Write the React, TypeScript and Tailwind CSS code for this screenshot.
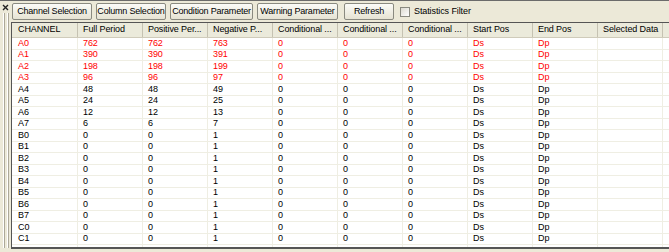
import React from "react";

const columns = [
  "CHANNEL",
  "Full Period",
  "Positive Per...",
  "Negative P...",
  "Conditional ...",
  "Conditional ...",
  "Conditional ...",
  "Start Pos",
  "End Pos",
  "Selected Data",
];

type Row = { ch: string; vals: string[]; red?: boolean };

const mk = (ch: string, a: string, b: string, c: string, red = false): Row => ({
  ch,
  vals: [a, b, c, "0", "0", "0", "Ds", "Dp", ""],
  red,
});

const rows: Row[] = [
  mk("A0", "762", "762", "763", true),
  mk("A1", "390", "390", "391", true),
  mk("A2", "198", "198", "199", true),
  mk("A3", "96", "96", "97", true),
  mk("A4", "48", "48", "49"),
  mk("A5", "24", "24", "25"),
  mk("A6", "12", "12", "13"),
  mk("A7", "6", "6", "7"),
  ...["B0", "B1", "B2", "B3", "B4", "B5", "B6", "B7", "C0", "C1", "C2"].map((c) =>
    mk(c, "0", "0", "1")
  ),
];

const buttons = [
  { label: "Channel Selection", w: "w-[80px]" },
  { label: "Column Selection", w: "w-[70px]" },
  { label: "Condition Parameter", w: "w-[83px]" },
  { label: "Warning Parameter", w: "w-[81px]" },
  { label: "Refresh", w: "w-[50px]" },
];

const ToolButton: React.FC<{ label: string; w: string }> = ({ label, w }) => (
  <button
    className={`${w} h-[17px] shrink-0 rounded-[2px] border border-[#8a8a80] bg-gradient-to-b from-[#fbfbf8] to-[#e6e3d3] text-[9px] tracking-[-0.2px] leading-none text-black whitespace-nowrap`}
  >
    {label}
  </button>
);

export default function App() {
  return (
    <div
      className="w-[669px] h-[252px] overflow-hidden flex bg-[#ece9d8] border-t border-[#6b6b6b] text-black"
      style={{ fontFamily: '"Liberation Sans", Arial, sans-serif' }}
    >
      {/* left grip strip */}
      <div className="w-[11px] shrink-0 flex flex-col items-center">
        <svg width="11" height="11" viewBox="0 0 11 11" className="mt-[1px]">
          <path d="M3 3 L8 8 M8 3 L3 8" stroke="#222" strokeWidth="1.4" />
        </svg>
        <div className="flex-1 w-full flex gap-[2px] pl-[3px] pb-[4px]">
          <div className="w-[2px] border-l border-white border-r border-r-[#aca899]" />
          <div className="w-[2px] border-l border-white border-r border-r-[#aca899]" />
        </div>
      </div>

      <div className="flex-1 flex flex-col min-w-0">
        {/* toolbar */}
        <div className="h-[21px] shrink-0 flex items-center pl-[1px]">
          <div className="flex items-center gap-[4px]">
            {buttons.slice(0, 4).map((b) => (
              <ToolButton key={b.label} {...b} />
            ))}
          </div>
          <div className="ml-[6px] flex items-center">
            <ToolButton {...buttons[4]} />
          </div>
          <label className="ml-[6px] flex items-center gap-[4px] text-[9px] tracking-[-0.1px] whitespace-nowrap">
            <span className="w-[10px] h-[10px] border border-[#8a8a80] bg-gradient-to-br from-[#dcdad0] to-white" />
            Statistics Filter
          </label>
        </div>

        {/* table */}
        <div className="flex-1 flex flex-col min-h-0 border-t border-l border-[#555] border-b-2 border-b-[#555] bg-white overflow-hidden mb-[3px]">
          <div className="grid grid-cols-[1px_repeat(10,65px)_1fr] h-[15px] shrink-0 bg-[#ebeadb] border-b border-[#cfcbba]">
            <div />
            {columns.map((c, i) => (
              <div
                key={i}
                className="pl-[5px] flex items-center text-[9px] tracking-[-0.1px] whitespace-nowrap overflow-hidden border-r border-[#c5c2b2]"
              >
                {c}
              </div>
            ))}
            <div />
          </div>
          <div className="flex-1 overflow-hidden">
            {rows.map((r) => (
              <div
                key={r.ch}
                className={`grid grid-cols-[1px_repeat(10,65px)_1fr] h-[11.5px] text-[9px] tracking-[-0.1px] leading-none ${
                  r.red ? "text-[#ff0000]" : "text-black"
                }`}
              >
                <div className="border-b border-[#efeee3]" />
                {[r.ch, ...r.vals].map((v, i) => (
                  <div
                    key={i}
                    className="pl-[5px] flex items-center border-r border-b border-[#efeee3] whitespace-nowrap overflow-hidden"
                  >
                    {v}
                  </div>
                ))}
                <div className="border-b border-[#efeee3]" />
              </div>
            ))}
          </div>
        </div>
      </div>
    </div>
  );
}
